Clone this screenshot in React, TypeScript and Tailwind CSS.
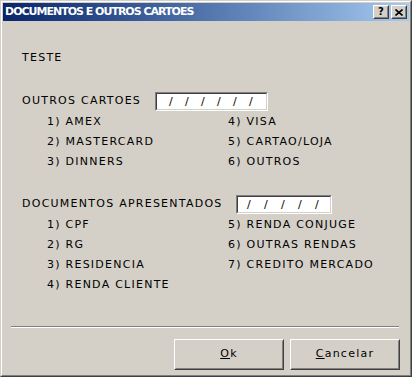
import React from 'react';

const FONT = "font-['DejaVu_Sans',sans-serif] text-[11px] tracking-[1.25px] text-black";

function Raised({ className = '', children }: { className?: string; children?: React.ReactNode }) {
  return (
    <div className={`border border-t-white border-l-white border-r-[#404040] border-b-[#404040] ${className}`}>
      <div className="flex h-full w-full items-center justify-center border border-t-[#d4d0c8] border-l-[#d4d0c8] border-r-[#808080] border-b-[#808080] bg-[#d4d0c8]">
        {children}
      </div>
    </div>
  );
}

function Slashes({ width, count, pad, gap }: { width: number; count: number; pad: string; gap: string }) {
  return (
    <div className="h-[19px] border border-t-[#808080] border-l-[#808080] border-r-white border-b-white" style={{ width }}>
      <div className={`flex h-full items-center border border-t-[#404040] border-l-[#404040] border-r-[#d4d0c8] border-b-[#d4d0c8] bg-white ${pad} ${gap}`}>
        {Array.from({ length: count }).map((_, i) => <span key={i} className="w-[4px] leading-none tracking-normal">/</span>)}
      </div>
    </div>
  );
}

const CARTOES: [string, string][] = [['1) AMEX', '4) VISA'], ['2) MASTERCARD', '5) CARTAO/LOJA'], ['3) DINNERS', '6) OUTROS']];
const DOCS: [string, string][] = [['1) CPF', '5) RENDA CONJUGE'], ['2) RG', '6) OUTRAS RENDAS'], ['3) RESIDENCIA', '7) CREDITO MERCADO'], ['4) RENDA CLIENTE', '']];

export default function App() {
  return (
    <div className={`h-[377px] w-[412px] border border-t-[#d4d0c8] border-l-[#d4d0c8] border-r-[#404040] border-b-[#404040] bg-[#d4d0c8] ${FONT}`}>
      <div className="flex h-full flex-col border border-t-white border-l-white border-r-[#808080] border-b-[#808080] p-px">
        {/* title bar */}
        <div className="flex h-[18px] shrink-0 items-center bg-gradient-to-r from-[#0a246a] to-[#a6caf0] pl-[2px] pr-[2px]">
          <span className="flex-1 font-['DejaVu_Sans',sans-serif] text-[11px] font-bold tracking-[-1px] text-white">DOCUMENTOS E OUTROS CARTOES</span>
          <div className="flex gap-[2px]">
            <Raised className="h-[14px] w-[16px]"><span className="text-[10px] font-bold leading-none tracking-normal">?</span></Raised>
            <Raised className="h-[14px] w-[16px]">
              <svg width="8" height="7" viewBox="0 0 8 7"><path d="M0.5 0.5L7.5 6.5M7.5 0.5L0.5 6.5" stroke="black" strokeWidth="1.6" /></svg>
            </Raised>
          </div>
        </div>

        {/* client */}
        <div className="flex flex-1 flex-col">
          <div className="mt-[27px] flex h-[20px] items-center pl-[19px] leading-[20px]">TESTE</div>

          <div className="mt-[23px] flex h-[20px] items-center pl-[19px] leading-[20px]">
            <span className="w-[133px]">OUTROS CARTOES</span>
            <Slashes width={113} count={6} pad="pl-[12px]" gap="gap-[12px]" />
          </div>
          <div className="mt-px grid grid-cols-[181px_1fr] pl-[44px] leading-[20px]">
            {CARTOES.map(([a, b]) => (
              <React.Fragment key={a}>
                <div className="h-[20px]">{a}</div>
                <div className="h-[20px]">{b}</div>
              </React.Fragment>
            ))}
          </div>

          <div className="mt-[22px] flex h-[20px] items-center pl-[19px] leading-[20px]">
            <span className="w-[214px]">DOCUMENTOS APRESENTADOS</span>
            <Slashes width={96} count={5} pad="pl-[9px]" gap="gap-[13px]" />
          </div>
          <div className="mt-px grid grid-cols-[181px_1fr] pl-[44px] leading-[20px]">
            {DOCS.map(([a, b]) => (
              <React.Fragment key={a}>
                <div className="h-[20px]">{a}</div>
                <div className="h-[20px]">{b}</div>
              </React.Fragment>
            ))}
          </div>

          <div className="ml-[8px] mr-[10px] mt-[31px]">
            <div className="h-px bg-[#808080]" />
            <div className="h-px bg-white" />
          </div>

          <div className="mt-[11px] flex justify-end gap-[6px] pr-[9px]">
            <Raised className="h-[31px] w-[110px]"><span><span className="underline">O</span>k</span></Raised>
            <Raised className="h-[31px] w-[110px]"><span><span className="underline">C</span>ancelar</span></Raised>
          </div>
        </div>
      </div>
    </div>
  );
}
